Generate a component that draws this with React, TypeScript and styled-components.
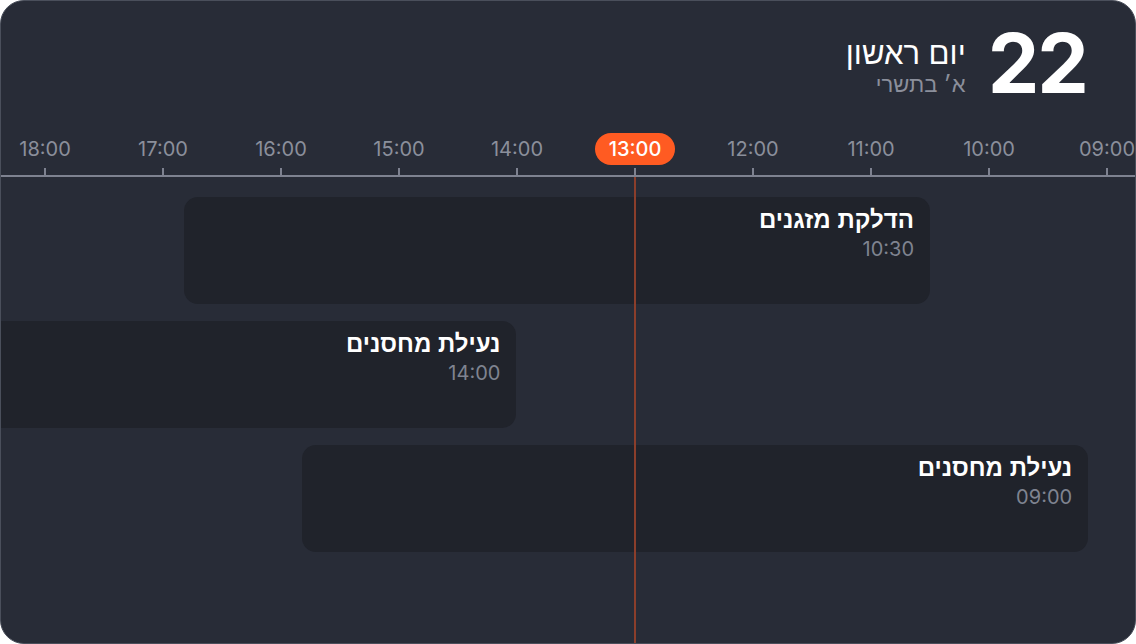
import { createGlobalStyle } from "styled-components"
import styled from "styled-components"

const GlobalStyle = createGlobalStyle`
  html, body {
    margin: 0;
    padding: 0;
    background: #ffffff;
  }
  body {
    font-family: "Liberation Sans", "Open Sans", sans-serif;
  }
`

// geometry of the time axis
const SLOT = 118
const FIRST_HOUR = 9
const FIRST_X = 1107 // centre of 09:00, page coords
const INNER_RIGHT = 1135
const NOW_HOUR = 13

const hourToX = (h: number) => FIRST_X - SLOT * (h - FIRST_HOUR)

const HOURS = [9, 10, 11, 12, 13, 14, 15, 16, 17, 18]

interface IEvent {
  id: number
  title: string
  time: string
  from: number
  to: number
}

const EVENTS: IEvent[] = [
  { id: 1, title: "הדלקת מזגנים", time: "10:30", from: 10.5, to: 16.82 },
  { id: 2, title: "נעילת מחסנים", time: "14:00", from: 14.005, to: 18.6 },
  { id: 3, title: "נעילת מחסנים", time: "09:00", from: 9.16, to: 15.82 }
]

const pad = (h: number) => `${h < 10 ? "0" : ""}${h}:00`

const Frame = styled.div`
  position: relative;
  box-sizing: border-box;
  width: 1136px;
  height: 644px;
  background: #282c37;
  border: 1px solid #4a4f5b;
  border-radius: 24px;
  overflow: hidden;
  direction: rtl;
`

const Header = styled.header`
  display: flex;
  align-items: center;
  gap: 22px;
  padding: 26px 48px 0 0;
  height: 100px;
  box-sizing: border-box;
`

const DayNumber = styled.div`
  font-family: Inter, sans-serif;
  font-weight: 700;
  font-size: 82px;
  line-height: 1;
  color: #ffffff;
  letter-spacing: -2px;
`

const DayInfo = styled.div`
  display: flex;
  flex-direction: column;
  gap: 0;
  padding-top: 6px;
`

const DayName = styled.div`
  font-size: 31px;
  line-height: 36px;
  color: #ffffff;
`

const HebrewDate = styled.div`
  font-size: 22px;
  line-height: 26px;
  color: #8b8f9b;
`

const Axis = styled.div`
  display: flex;
  margin-top: 32px;
  margin-inline-start: -${FIRST_X + SLOT / 2 - INNER_RIGHT}px;
  border-bottom: 2px solid #7e8290;
  width: max-content;
`

const Slot = styled.div`
  width: ${SLOT}px;
  display: flex;
  flex-direction: column;
  align-items: center;
`

const HourLabel = styled.span<{ $active?: boolean }>`
  direction: ltr;
  font-family: Inter, sans-serif;
  font-size: 20px;
  line-height: 32px;
  height: 32px;
  padding: 0 14px;
  border-radius: 16px;
  color: ${(p) => (p.$active ? "#ffffff" : "#8b8f9b")};
  background: ${(p) => (p.$active ? "#ff5b22" : "transparent")};
  font-weight: ${(p) => (p.$active ? 500 : 400)};
`

const Tick = styled.div`
  width: 2px;
  height: 7px;
  margin-top: 3px;
  background: #7e8290;
`

const NowLine = styled.div`
  position: absolute;
  top: 176px;
  bottom: 0;
  width: 2px;
  background: #8b3e2b;
`

const Rows = styled.div`
  display: flex;
  flex-direction: column;
  gap: 17px;
  padding-top: 20px;
`

const Row = styled.div`
  display: flex;
`

const EventCard = styled.div`
  flex: none;
  box-sizing: border-box;
  height: 107px;
  padding: 8px 16px;
  border-radius: 14px;
  background: #20232b;
  display: flex;
  flex-direction: column;
  gap: 1px;
`

const EventTitle = styled.div`
  font-size: 24px;
  line-height: 30px;
  font-weight: 700;
  color: #ffffff;
`

const EventTime = styled.div`
  font-family: Inter, sans-serif;
  font-size: 20px;
  line-height: 26px;
  color: #7f8390;
`

const App = () => {
  return (
    <>
      <GlobalStyle />
      <Frame>
        <Header>
          <DayNumber>22</DayNumber>
          <DayInfo>
            <DayName>יום ראשון</DayName>
            <HebrewDate>א׳ בתשרי</HebrewDate>
          </DayInfo>
        </Header>
        <Axis>
          {HOURS.map((h) => (
            <Slot key={h}>
              <HourLabel $active={h === NOW_HOUR}>{pad(h)}</HourLabel>
              <Tick />
            </Slot>
          ))}
        </Axis>
        <Rows>
          {EVENTS.map((ev) => {
            const right = hourToX(ev.from)
            const left = hourToX(ev.to)
            return (
              <Row key={ev.id}>
                <EventCard
                  style={{ marginRight: INNER_RIGHT - right, width: right - left }}
                >
                  <EventTitle>{ev.title}</EventTitle>
                  <EventTime>{ev.time}</EventTime>
                </EventCard>
              </Row>
            )
          })}
        </Rows>
        <NowLine style={{ left: hourToX(NOW_HOUR) - 2 }} />
      </Frame>
    </>
  )
}

export default App
